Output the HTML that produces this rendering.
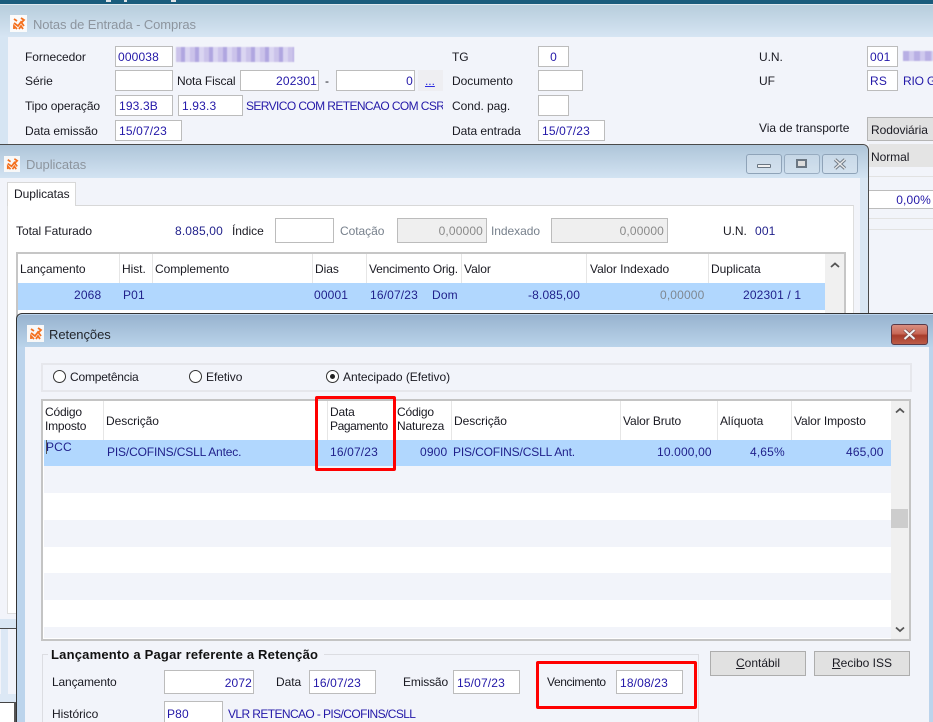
<!DOCTYPE html>
<html><head><meta charset="utf-8"><style>
html,body{margin:0;padding:0;overflow:hidden}
body{width:933px;height:722px;position:relative;overflow:hidden;background:#f2f4fa;font:12px/14px "Liberation Sans",sans-serif;color:#1a1a22}
div,span.t,svg{position:absolute}
.t{position:absolute;white-space:nowrap;letter-spacing:-.05px;margin-top:1px}
.b{color:#2318a8;letter-spacing:-.6px}
.n{color:#1f1f8a;letter-spacing:.15px;margin-top:0}
.r{text-align:right}
.f{position:absolute;box-sizing:border-box;background:#fff;border:1px solid #bcbcbc;color:#2318a8;white-space:nowrap;line-height:21px;padding:0 3px;letter-spacing:.15px;height:21px}
.f.r{padding-right:1px}
.d{background:#efefef;color:#8a8a8a;text-align:right}
.hs{position:absolute;width:1px;background:#e6e6e6}
.g{color:#77808c}
.btn{position:absolute;box-sizing:border-box;background:#e1e1e1;border:1px solid #adadad;text-align:center;line-height:23px;height:25px;width:96px}
.red{position:absolute;box-sizing:border-box;border:3px solid #f00;border-radius:2px}
.rad{position:absolute;box-sizing:border-box;width:13px;height:13px;border:1px solid #333;border-radius:50%;background:#fff}
.wb{position:absolute;box-sizing:border-box;width:36px;height:20px;border:1px solid #8fa3b8;border-radius:3px;background:linear-gradient(#c9d9e8,#d3e1ee)}
</style></head><body>
<!-- top strip -->
<div style="left:0;top:0;width:933px;height:4px;background:#1a5c7c"></div>
<div style="left:0;top:4px;width:933px;height:1px;background:#dfe8ef"></div>
<div style="left:106px;top:0;width:5px;height:2px;background:#dfe4e8"></div>
<div style="left:124px;top:0;width:3px;height:2px;background:#dfe4e8"></div>
<div style="left:171px;top:0;width:5px;height:2px;background:#dfe4e8"></div>
<!-- window 1 -->
<div style="left:0;top:5px;width:933px;height:32px;background:linear-gradient(#b7cddc,#d6e5f3)"></div>
<div style="left:0;top:37px;width:8px;height:110px;background:#d6e5f3"></div>
<div style="left:8px;top:37px;width:925px;height:110px;background:#f2f4fa"></div>
<svg style="left:10px;top:15px" width="17" height="17" viewBox="0 0 17 17"><rect width="17" height="17" fill="#fbfbfb"/><path d="M4 4l3 2M11 3l3 2-2 2M4 8l4 3 3-4 3 4M4 14v-3l3 3M9 14l2-3 2 3" stroke="#f4701e" stroke-width="1.800" fill="none"/></svg>
<span class="t" style="left:33px;top:17px;font-size:13px;color:#8d959e;letter-spacing:-.1px">Notas de Entrada - Compras</span>

<span class="t" style="left:25px;top:49px">Fornecedor</span>
<div class="f" style="left:115px;top:46px;width:58px;padding-left:2px">000038</div>
<div style="left:176px;top:47px;width:118px;height:15px;background:repeating-linear-gradient(90deg,#cbc3ea 0 5px,#b0a6e0 5px 9px,#dad5f1 9px 14px);filter:blur(.6px)"></div>
<span class="t" style="left:25px;top:73px">Série</span>
<div class="f" style="left:115px;top:70px;width:58px"></div>
<span class="t" style="left:177px;top:73px;letter-spacing:-.15px">Nota Fiscal</span>
<div class="f r" style="left:240px;top:70px;width:79px">202301</div>
<span class="t" style="left:325px;top:73px">-</span>
<div class="f r" style="left:336px;top:70px;width:79px">0</div>
<div style="left:418px;top:70px;width:25px;height:21px;background:#eeeef2"></div>
<span class="t" style="left:425px;top:73px;color:#2a2ae0;text-decoration:underline">...</span>
<span class="t" style="left:25px;top:98px;letter-spacing:-.1px">Tipo operação</span>
<div class="f" style="left:115px;top:95px;width:58px">193.3B</div>
<div class="f" style="left:178px;top:95px;width:65px">1.93.3</div>
<span class="t b" style="left:246px;top:98px;width:197px;overflow:hidden">SERVICO COM RETENCAO COM CSR</span>
<span class="t" style="left:25px;top:123px">Data emissão</span>
<div class="f" style="left:115px;top:120px;width:67px">15/07/23</div>

<span class="t" style="left:452px;top:49px">TG</span>
<div class="f" style="left:538px;top:46px;width:31px;text-align:center">0</div>
<span class="t" style="left:452px;top:73px">Documento</span>
<div class="f" style="left:538px;top:70px;width:45px"></div>
<span class="t" style="left:452px;top:98px">Cond. pag.</span>
<div class="f" style="left:538px;top:95px;width:31px"></div>
<span class="t" style="left:452px;top:123px">Data entrada</span>
<div class="f" style="left:538px;top:120px;width:67px">15/07/23</div>

<span class="t" style="left:759px;top:49px">U.N.</span>
<div class="f" style="left:867px;top:46px;width:31px;padding-left:2px">001</div>
<div style="left:903px;top:51px;width:30px;height:10px;background:repeating-linear-gradient(90deg,#b8afe4 0 6px,#cfc9ee 6px 11px);filter:blur(.5px)"></div>
<span class="t" style="left:759px;top:73px">UF</span>
<div class="f" style="left:867px;top:70px;width:31px;padding-left:2px">RS</div>
<span class="t b" style="left:903px;top:73px;letter-spacing:-.2px">RIO G</span>
<span class="t" style="left:759px;top:120px">Via de transporte</span>
<div style="box-sizing:border-box;left:867px;top:117px;width:70px;height:24px;background:#e1e1e1;border:1px solid #b5b5b5"></div>
<span class="t" style="left:871px;top:122px">Rodoviária</span>
<div style="left:869px;top:144px;width:64px;height:23px;background:#e4e4e4;border-bottom:1px solid #d0d0d0"></div>
<span class="t" style="left:871px;top:149px">Normal</span>
<div style="left:869px;top:167px;width:64px;height:146px;background:#f2f4fa"></div>
<div style="left:869px;top:176px;width:64px;height:1px;background:#e2e2e2"></div>
<div class="f r" style="left:869px;top:190px;width:64px;height:19px;line-height:19px;border-width:1px 0;padding-right:2px">0,00%</div>
<div style="left:869px;top:218px;width:64px;height:1px;background:#e2e2e2"></div>
<div style="left:869px;top:229px;width:64px;height:1px;background:#e2e2e2"></div>

<!-- Duplicatas window -->
<div style="left:0;top:144px;width:869px;height:485px;box-sizing:border-box;border:1px solid #4a4a4a;border-left:0;border-top-right-radius:6px;background:#d9e6f3"></div>
<div style="left:0;top:145px;width:868px;height:33px;background:linear-gradient(#aec5d9,#d3e3f2);border-top-right-radius:6px"></div>
<div style="left:0;top:178px;width:860px;height:441px;background:#f2f4fa"></div>
<div style="left:7px;top:205px;width:847px;height:409px;background:#fff;box-sizing:border-box;border:1px solid #dedede;border-top:1px solid #d8d8d8"></div>
<div style="left:7px;top:182px;width:69px;height:24px;box-sizing:border-box;background:#fff;border:1px solid #d8d8d8;border-bottom:0"></div>
<svg style="left:4px;top:156px" width="16" height="16" viewBox="0 0 17 17"><rect width="17" height="17" fill="#f8f8f8"/><path d="M4 4l3 2M11 3l3 2-2 2M4 8l4 3 3-4 3 4M4 14v-3l3 3M9 14l2-3 2 3" stroke="#f4701e" stroke-width="1.800" fill="none"/></svg>
<span class="t" style="left:26px;top:157px;font-size:13px;color:#8d959e">Duplicatas</span>
<span class="t" style="left:14px;top:186px">Duplicatas</span>
<div class="wb" style="left:746px;top:154px"></div><div style="left:757px;top:164px;width:14px;height:4px;box-sizing:border-box;border:1px solid #6a7682;background:#f1f1f1;border-radius:1px"></div>
<div class="wb" style="left:784px;top:154px;opacity:.8"></div><div style="left:796px;top:159px;width:11px;height:9px;box-sizing:border-box;border:2px solid #6a7682;background:#ddd"></div>
<div class="wb" style="left:822px;top:154px"></div>
<svg style="left:833px;top:158px" width="14" height="12" viewBox="0 0 14 12"><path d="M2 1.500L12 10.500M12 1.500L2 10.500" stroke="#717c88" stroke-width="3.500"/><path d="M2 1.500L12 10.500M12 1.500L2 10.500" stroke="#e8e8e8" stroke-width="1.500"/></svg>

<span class="t" style="left:16px;top:223px">Total Faturado</span>
<span class="t n" style="left:175px;top:224px">8.085,00</span>
<span class="t" style="left:232px;top:223px">Índice</span>
<div class="f" style="left:275px;top:218px;width:59px;height:25px"></div>
<span class="t g" style="left:340px;top:223px">Cotação</span>
<div class="f d" style="left:397px;top:218px;width:90px;height:25px;line-height:25px">0,00000</div>
<span class="t g" style="left:491px;top:223px">Indexado</span>
<div class="f d" style="left:551px;top:218px;width:117px;height:25px;line-height:25px">0,00000</div>
<span class="t" style="left:723px;top:223px">U.N.</span>
<span class="t n" style="left:755px;top:224px">001</span>

<!-- Grid 1 -->
<div style="left:16px;top:252px;width:830px;height:70px;box-sizing:border-box;border:2px solid #c6c6c6;background:#fff"></div>
<div style="left:825px;top:254px;width:19px;height:60px;background:#f0f0f0"></div>
<div style="left:18px;top:283px;width:807px;height:27px;background:#b1d7fe"></div>
<svg style="left:829px;top:261px" width="12" height="9"><path d="M2 6L6 2.500L10 6" stroke="#555" stroke-width="1.800" fill="none"/></svg>
<div class="hs" style="left:119px;top:254px;height:29px"></div><div class="hs" style="left:152px;top:254px;height:29px"></div><div class="hs" style="left:312px;top:254px;height:29px"></div><div class="hs" style="left:366px;top:254px;height:29px"></div><div class="hs" style="left:461px;top:254px;height:29px"></div><div class="hs" style="left:586px;top:254px;height:29px"></div><div class="hs" style="left:708px;top:254px;height:29px"></div>
<span class="t" style="left:20px;top:261px">Lançamento</span>
<span class="t" style="left:122px;top:261px">Hist.</span>
<span class="t" style="left:155px;top:261px">Complemento</span>
<span class="t" style="left:315px;top:261px">Dias</span>
<span class="t" style="left:369px;top:261px;letter-spacing:-.2px">Vencimento Orig.</span>
<span class="t" style="left:464px;top:261px">Valor</span>
<span class="t" style="left:590px;top:261px">Valor Indexado</span>
<span class="t" style="left:711px;top:261px">Duplicata</span>
<span class="t n" style="left:74px;top:288px">2068</span>
<span class="t n" style="left:123px;top:288px">P01</span>
<span class="t n" style="left:314px;top:288px">00001</span>
<span class="t n" style="left:370px;top:288px">16/07/23</span>
<span class="t n" style="left:432px;top:288px">Dom</span>
<span class="t n" style="left:528px;top:288px">-8.085,00</span>
<span class="t n" style="left:660px;top:288px;color:#7f8892">0,00000</span>
<span class="t n" style="left:743px;top:288px">202301 / 1</span>

<!-- left bottom -->
<div style="left:0;top:629px;width:16px;height:93px;background:#f2f4fa"></div>
<div style="left:1px;top:629px;width:7px;height:65px;background:#dce8f5"></div>
<div style="left:0;top:694px;width:16px;height:8px;background:#dce8f5"></div>
<div style="left:0;top:702px;width:14px;height:1px;background:#444"></div>
<div style="left:0;top:703px;width:14px;height:19px;background:#fff"></div>
<div style="left:14px;top:702px;width:2px;height:20px;background:#555"></div>

<!-- Retencoes window -->
<div style="left:16px;top:313px;width:917px;height:409px;box-sizing:border-box;border:1px solid #333;border-right:0;border-bottom:0;border-top-left-radius:6px;background:#bcd4ec"></div>
<div style="left:17px;top:315px;width:916px;height:32px;background:linear-gradient(#98b3cf,#bad3ea);border-top-left-radius:5px"></div>
<div style="left:25px;top:347px;width:904px;height:375px;background:#f2f4fa"></div>
<svg style="left:27px;top:325px" width="17" height="17" viewBox="0 0 17 17"><rect width="17" height="17" fill="#f8f8f8"/><path d="M4 4l3 2M11 3l3 2-2 2M4 8l4 3 3-4 3 4M4 14v-3l3 3M9 14l2-3 2 3" stroke="#f4701e" stroke-width="1.800" fill="none"/></svg>
<span class="t" style="left:49px;top:327px;font-size:13px;color:#22262c">Retenções</span>
<div style="box-sizing:border-box;left:891px;top:324px;width:37px;height:21px;border:1px solid #5a3a48;border-radius:3px;background:linear-gradient(#d98e80 0,#c96a58 45%,#a83c2a 55%,#bc5c48 100%)"></div>
<svg style="left:902px;top:328px" width="15" height="13" viewBox="0 0 15 13"><path d="M2.500 2L12.500 11M12.500 2L2.500 11" stroke="#7a4a48" stroke-width="3.500"/><path d="M2.500 2L12.500 11M12.500 2L2.500 11" stroke="#f2f2f2" stroke-width="2"/></svg>

<div style="left:41px;top:363px;width:871px;height:29px;box-sizing:border-box;border:2px solid #e6e7ec"></div>
<div class="rad" style="left:53px;top:370px"></div>
<span class="t" style="left:70px;top:369px;letter-spacing:-.2px">Competência</span>
<div class="rad" style="left:189px;top:370px"></div>
<span class="t" style="left:206px;top:369px">Efetivo</span>
<div class="rad" style="left:326px;top:370px"></div><div style="left:330px;top:374px;width:5px;height:5px;border-radius:50%;background:#222"></div>
<span class="t" style="left:343px;top:369px">Antecipado (Efetivo)</span>

<!-- Grid 2 -->
<div style="left:41px;top:399px;width:870px;height:242px;box-sizing:border-box;border:2px solid #c4c4c4;background:#fff"></div>
<div style="left:891px;top:401px;width:18px;height:238px;background:#f0f0f0"></div>
<div style="left:891px;top:509px;width:17px;height:19px;background:#cdcdcd"></div>
<svg style="left:893px;top:406px" width="14" height="9"><path d="M3 6.500L7 3L11 6.500" stroke="#555" stroke-width="1.800" fill="none"/></svg>
<svg style="left:893px;top:625px" width="14" height="9"><path d="M3 2.500L7 6L11 2.500" stroke="#555" stroke-width="1.800" fill="none"/></svg>
<div style="left:44px;top:440px;width:847px;height:26px;background:#b1d7fe"></div>
<div style="left:44px;top:466px;width:847px;height:27px;background:#f2f4fa"></div>
<div style="left:44px;top:520px;width:847px;height:27px;background:#f2f4fa"></div>
<div style="left:44px;top:573px;width:847px;height:27px;background:#f2f4fa"></div>
<div style="left:44px;top:627px;width:847px;height:11px;background:#f2f4fa"></div>
<div class="hs" style="left:103px;top:401px;height:39px"></div><div class="hs" style="left:327px;top:401px;height:39px"></div><div class="hs" style="left:394px;top:401px;height:39px"></div><div class="hs" style="left:451px;top:401px;height:39px"></div><div class="hs" style="left:620px;top:401px;height:39px"></div><div class="hs" style="left:717px;top:401px;height:39px"></div><div class="hs" style="left:791px;top:401px;height:39px"></div>
<span class="t" style="left:45px;top:404px;letter-spacing:-.2px">Código</span><span class="t" style="left:45px;top:418px;letter-spacing:-.2px">Imposto</span>
<span class="t" style="left:106px;top:413px">Descrição</span>
<span class="t" style="left:330px;top:404px;letter-spacing:-.2px">Data</span><span class="t" style="left:330px;top:418px;letter-spacing:-.4px">Pagamento</span>
<span class="t" style="left:397px;top:404px;letter-spacing:-.2px">Código</span><span class="t" style="left:397px;top:418px;letter-spacing:-.2px">Natureza</span>
<span class="t" style="left:454px;top:413px">Descrição</span>
<span class="t" style="left:623px;top:413px;letter-spacing:-.1px">Valor Bruto</span>
<span class="t" style="left:720px;top:413px;letter-spacing:-.1px">Alíquota</span>
<span class="t" style="left:794px;top:413px;letter-spacing:-.1px">Valor Imposto</span>
<span class="t n" style="left:46px;top:440px">PCC</span>
<div style="left:46px;top:440px;width:1px;height:14px;background:#555"></div>
<span class="t n" style="left:107px;top:445px;letter-spacing:-.15px">PIS/COFINS/CSLL Antec.</span>
<span class="t n" style="left:330px;top:445px">16/07/23</span>
<span class="t n" style="left:420px;top:445px">0900</span>
<span class="t n" style="left:453px;top:445px;letter-spacing:-.15px">PIS/COFINS/CSLL Ant.</span>
<span class="t n" style="left:657px;top:445px">10.000,00</span>
<span class="t n" style="left:750px;top:445px">4,65%</span>
<span class="t n" style="left:846px;top:445px">465,00</span>

<div class="red" style="left:315px;top:396px;width:81px;height:75px"></div>

<!-- Group -->
<div style="left:42px;top:654px;width:657px;height:68px;box-sizing:border-box;border:1px solid #dcdde2;border-bottom:0"></div>
<div style="left:48px;top:648px;width:276px;height:14px;background:#f2f4fa"></div>
<span class="t" style="left:51px;top:647px;font-size:13px;font-weight:bold;color:#111;letter-spacing:.2px">Lançamento a Pagar referente a Retenção</span>
<span class="t" style="left:52px;top:674px;letter-spacing:-.15px">Lançamento</span>
<div class="f r" style="left:164px;top:670px;width:90px;height:24px;line-height:25px">2072</div>
<span class="t" style="left:276px;top:674px">Data</span>
<div class="f" style="left:309px;top:670px;width:67px;height:24px;line-height:25px">16/07/23</div>
<span class="t" style="left:403px;top:674px;letter-spacing:-.15px">Emissão</span>
<div class="f" style="left:453px;top:670px;width:67px;height:24px;line-height:25px">15/07/23</div>
<span class="t" style="left:547px;top:674px;letter-spacing:-.4px">Vencimento</span>
<div class="f" style="left:616px;top:670px;width:67px;height:24px;line-height:25px">18/08/23</div>
<div class="red" style="left:536px;top:661px;width:161px;height:48px"></div>
<span class="t" style="left:52px;top:706px">Histórico</span>
<div class="f" style="left:164px;top:701px;width:59px;height:24px;line-height:25px;padding-left:2px">P80</div>
<span class="t b" style="left:228px;top:706px">VLR RETENCAO - PIS/COFINS/CSLL</span>
<div class="btn" style="left:710px;top:651px"><u>C</u>ontábil</div>
<div class="btn" style="left:814px;top:651px"><u>R</u>ecibo ISS</div>
</body></html>
